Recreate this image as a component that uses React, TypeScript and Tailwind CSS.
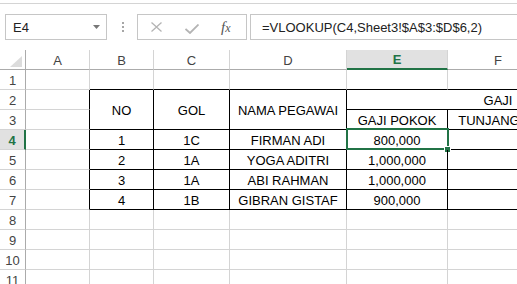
import React from 'react'

const GRID = 'border-r-[#d4d4d4] border-b-[#d4d4d4]'
const BLACK = 'border-r-black border-b-black'

type CellProps = { children?: React.ReactNode; className?: string }

function Cell({ children, className = '' }: CellProps) {
  return (
    <div
      className={`flex items-center justify-center pt-[2px] border-r border-b whitespace-nowrap overflow-visible ${className}`}
    >
      {children}
    </div>
  )
}

function RowHead({ n, active = false }: { n: number; active?: boolean }) {
  return (
    <Cell
      className={
        active
          ? 'bg-[#e1e1e1] border-r-2 border-r-[#217346] border-b-[#d4d4d4] text-[#217346] font-bold'
          : 'border-r-[#ababab] border-b-[#d4d4d4] text-[#444]'
      }
    >
      {n}
    </Cell>
  )
}

const people = [
  { no: '1', gol: '1C', nama: 'FIRMAN ADI', gaji: '800,000' },
  { no: '2', gol: '1A', nama: 'YOGA ADITRI', gaji: '1,000,000' },
  { no: '3', gol: '1A', nama: 'ABI RAHMAN', gaji: '1,000,000' },
  { no: '4', gol: '1B', nama: 'GIBRAN GISTAF', gaji: '900,000' },
]

export default function App() {
  return (
    <div className="w-[517px] h-[284px] overflow-hidden bg-white font-['Liberation_Sans',Arial,sans-serif] text-[13px] text-black">
      {/* ribbon edge */}
      <div className="h-[4px] border-b border-[#d4d4d4]" />

      {/* formula bar */}
      <div className="flex items-start pt-[10px] pb-[10px] pl-[5px] w-[700px]">
        <div className="w-[102px] h-[26px] border border-[#c6c6c6] flex items-center justify-between pl-[7px] pr-[6px]">
          <span className="text-[#222] pt-[1px]">E4</span>
          <svg width="7" height="4" viewBox="0 0 7 4">
            <path d="M0 0h7L3.5 4z" fill="#777" />
          </svg>
        </div>
        <div className="w-[30px] h-[26px] flex flex-col items-center justify-center gap-[2px] pl-[1px]">
          <span className="w-[2px] h-[2px] bg-[#a6a6a6]" />
          <span className="w-[2px] h-[2px] bg-[#a6a6a6]" />
          <span className="w-[2px] h-[2px] bg-[#a6a6a6]" />
        </div>
        <div className="w-[110px] h-[26px] border border-[#c6c6c6] flex items-center">
          <svg className="ml-[13px]" width="11" height="10" viewBox="0 0 11 10">
            <path d="M0.5 0.5l10 9M10.5 0.5l-10 9" stroke="#b4b4b4" strokeWidth="1.3" fill="none" />
          </svg>
          <svg className="ml-[23px] mt-[3px]" width="14" height="10" viewBox="0 0 14 10">
            <path d="M0.5 5l4.5 4L13.5 0.5" stroke="#b4b4b4" strokeWidth="1.8" fill="none" />
          </svg>
          <span className="ml-[22px] font-['Liberation_Serif',serif] italic text-[15px] text-[#555] leading-none">
            f<span className="text-[12px]">x</span>
          </span>
        </div>
        <div className="ml-[3px] flex-1 h-[26px] border border-[#c6c6c6] flex items-center pl-[11px] pt-[1px] text-[#222]">
          =VLOOKUP(C4,Sheet3!$A$3:$D$6,2)
        </div>
      </div>

      {/* sheet */}
      <div className="grid grid-cols-[26px_64px_64px_76px_117px_101px_101px_101px] auto-rows-[20px] w-max">
        {/* column headers */}
        <div className="flex items-end justify-end pr-[3px] pb-[2px] border-r border-b border-r-[#ababab] border-b-[#ababab]">
          <svg width="12" height="11" viewBox="0 0 12 11">
            <path d="M12 0V11H0z" fill="#dcdcdc" />
          </svg>
        </div>
        {['A', 'B', 'C', 'D'].map((c) => (
          <Cell key={c} className="border-r-[#d4d4d4] border-b-[#ababab] text-[#444]">
            {c}
          </Cell>
        ))}
        <Cell className="bg-[#e1e1e1] border-r-[#d4d4d4] border-b-2 border-b-[#217346] text-[#217346] font-bold">
          E
        </Cell>
        <Cell className="border-r-[#d4d4d4] border-b-[#ababab] text-[#444]">F</Cell>
        <Cell className="border-r-[#d4d4d4] border-b-[#ababab] text-[#444]">G</Cell>

        {/* row 1 */}
        <RowHead n={1} />
        <Cell className={GRID} />
        {[0, 1, 2, 3, 4, 5].map((i) => (
          <Cell key={i} className="border-r-[#d4d4d4] border-b-black" />
        ))}

        {/* row 2 */}
        <RowHead n={2} />
        <Cell className="border-r-black border-b-[#d4d4d4]" />
        <Cell className={`row-span-2 ${BLACK}`}>NO</Cell>
        <Cell className={`row-span-2 ${BLACK}`}>GOL</Cell>
        <Cell className={`row-span-2 ${BLACK}`}>NAMA PEGAWAI</Cell>
        <Cell className={`col-span-3 ${BLACK}`}>GAJI</Cell>

        {/* row 3 */}
        <RowHead n={3} />
        <Cell className="border-r-black border-b-[#d4d4d4]" />
        <Cell className={BLACK}>GAJI POKOK</Cell>
        <Cell className={BLACK}>TUNJANGAN</Cell>
        <Cell className={BLACK} />

        {/* rows 4-7 */}
        {people.map((p, i) => (
          <React.Fragment key={p.no}>
            <RowHead n={i + 4} active={i === 0} />
            <Cell className="border-r-black border-b-[#d4d4d4]" />
            <Cell className={BLACK}>{p.no}</Cell>
            <Cell className={BLACK}>{p.gol}</Cell>
            <Cell className={BLACK}>{p.nama}</Cell>
            <div className={`relative flex items-center justify-center pt-[2px] border-r border-b ${BLACK}`}>
              {p.gaji}
              {i === 0 && (
                <>
                  <div className="absolute -left-[1px] -top-[2px] w-[103px] h-[22px] border-2 border-[#217346]" />
                  <div className="absolute left-[97px] top-[16px] w-[7px] h-[7px] bg-[#217346] border border-white" />
                </>
              )}
            </div>
            <Cell className={BLACK} />
            <Cell className={BLACK} />
          </React.Fragment>
        ))}

        {/* rows 8-11 */}
        {[8, 9, 10, 11].map((n) => (
          <React.Fragment key={n}>
            <RowHead n={n} />
            {[0, 1, 2, 3, 4, 5, 6].map((i) => (
              <Cell key={i} className={GRID} />
            ))}
          </React.Fragment>
        ))}
      </div>
    </div>
  )
}
